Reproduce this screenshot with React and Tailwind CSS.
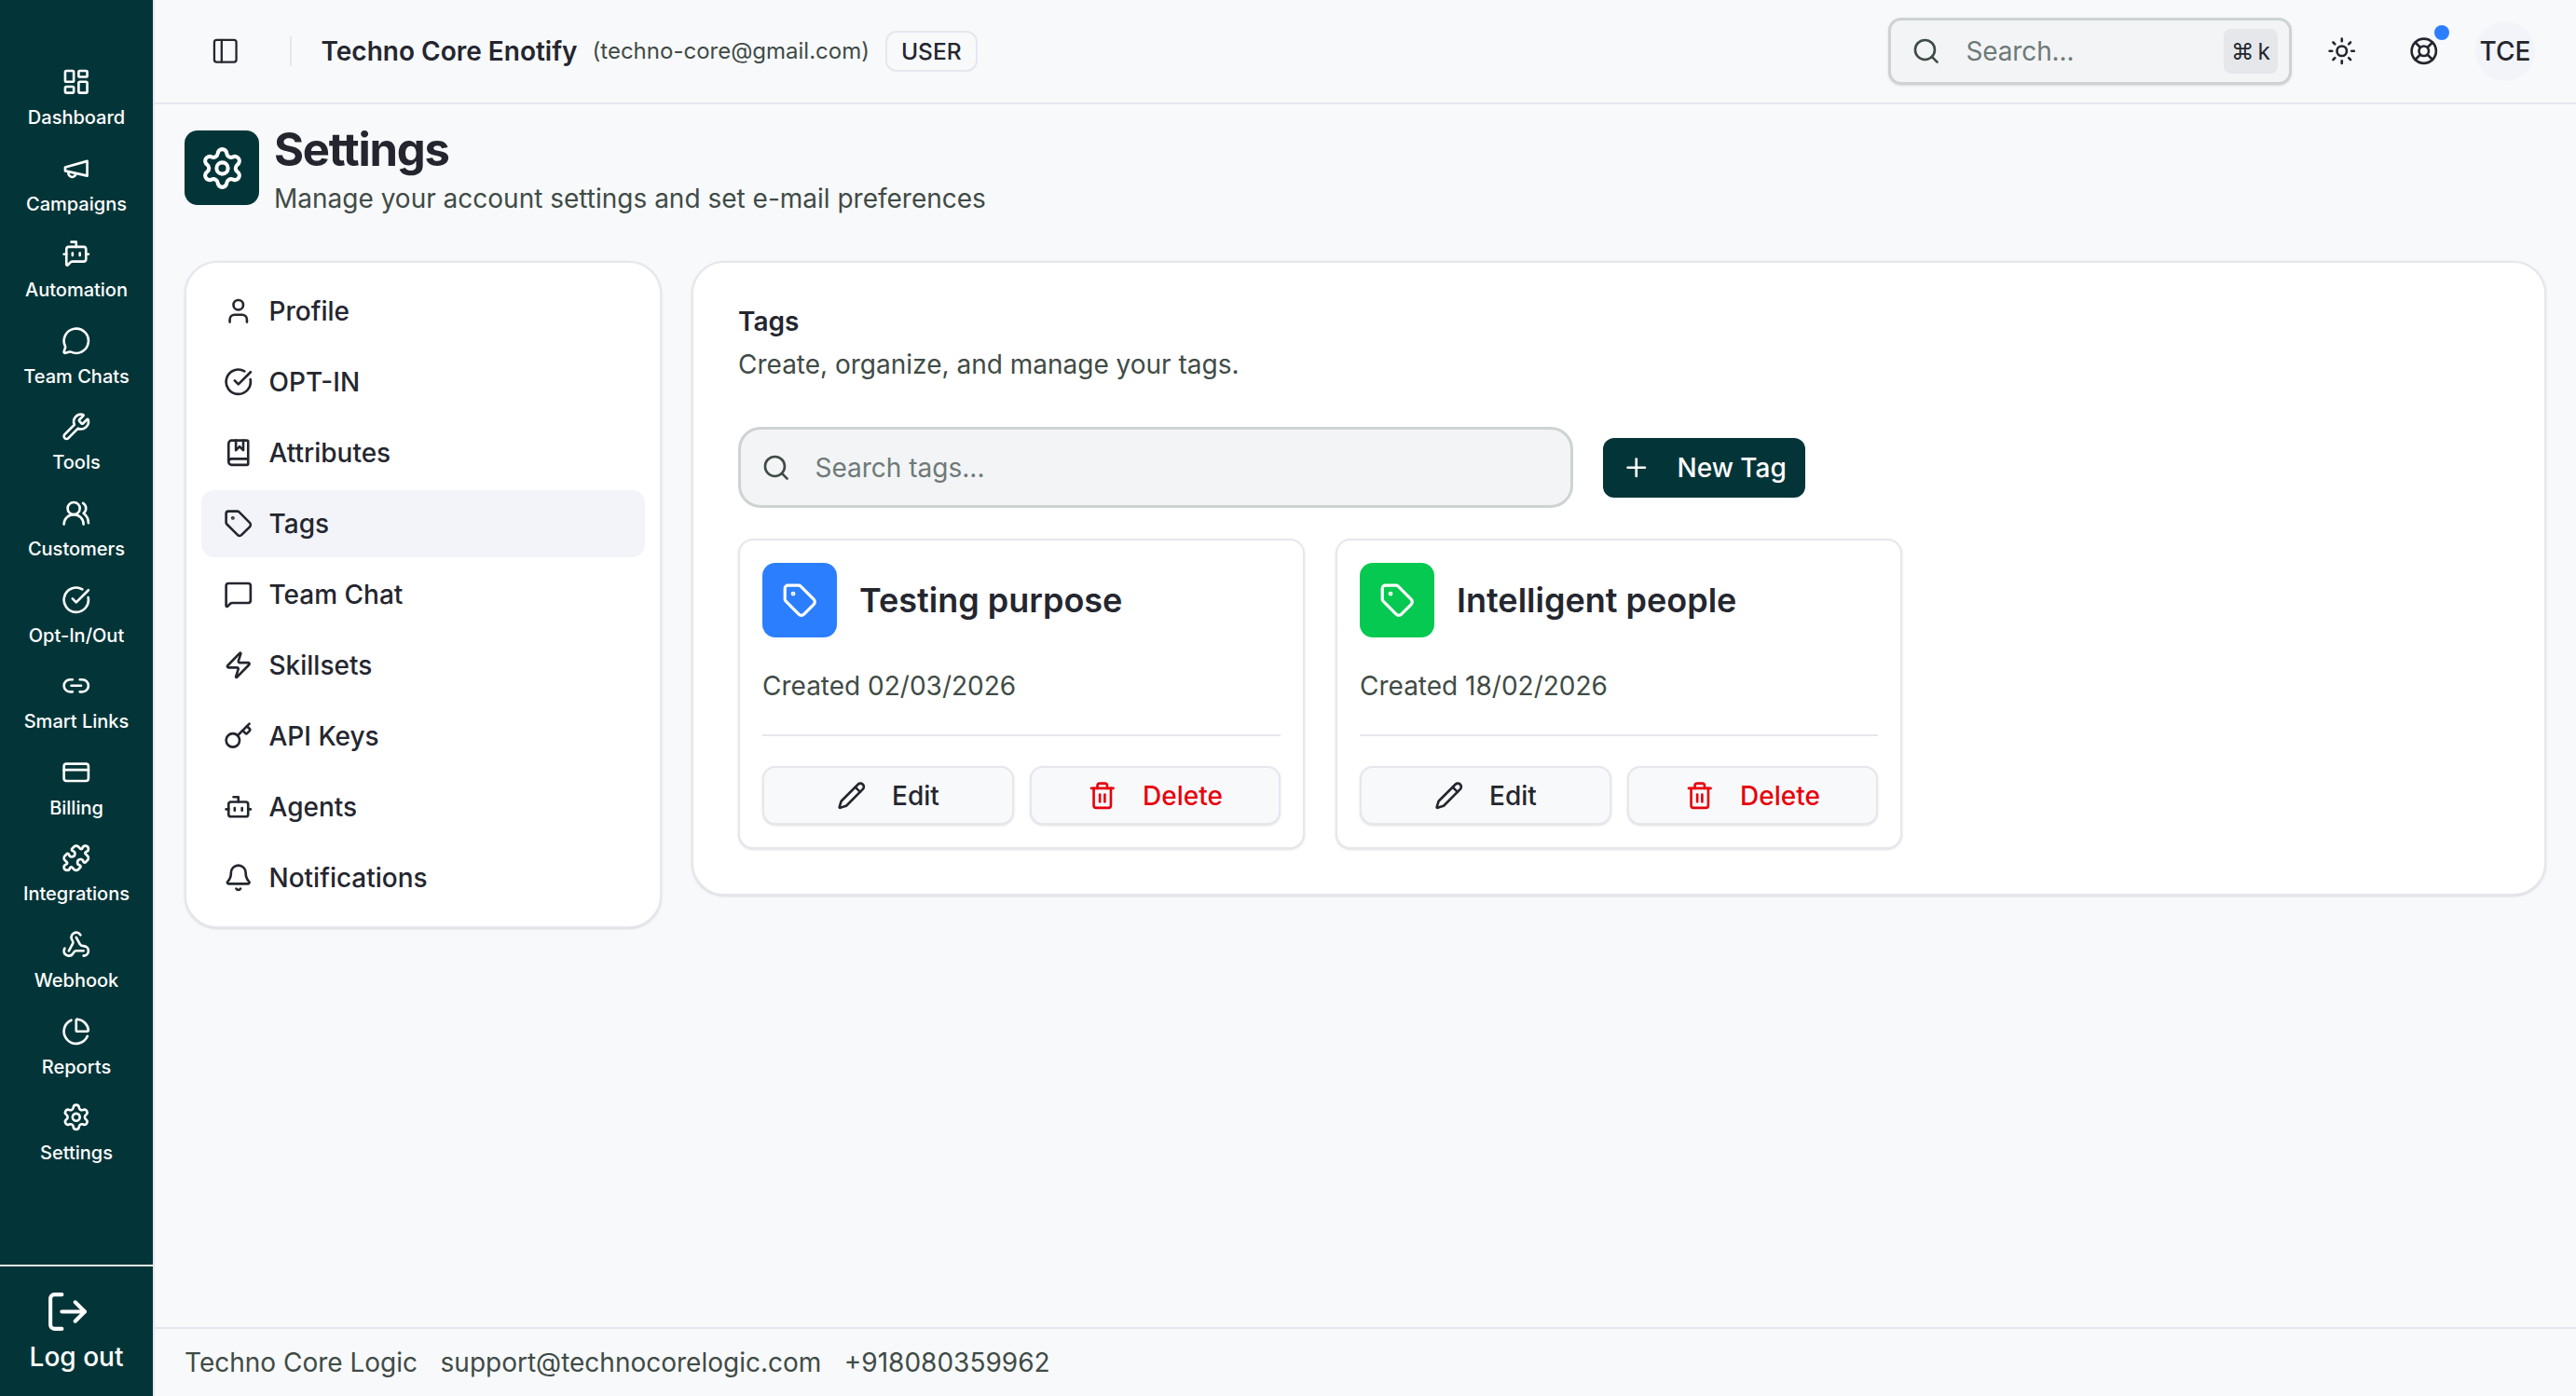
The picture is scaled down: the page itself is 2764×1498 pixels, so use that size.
import React from "react";
import {
  LayoutDashboard,
  BotMessageSquare,
  MessageCircle,
  Wrench,
  UsersRound,
  CircleCheckBig,
  Link2,
  CreditCard,
  Puzzle,
  Webhook,
  ChartPie,
  Settings,
  LogOut,
  PanelLeft,
  Search,
  Sun,
  LifeBuoy,
  User,
  BookMarked,
  Tag,
  MessageSquare,
  Zap,
  Key,
  Bot,
  Bell,
  Plus,
  Pencil,
  Trash2,
} from "lucide-react";

// lucide's current megaphone is a different drawing, so this one is inline
function Megaphone({ size }) {
  return (
    <svg
      width={size}
      height={size}
      viewBox="0 0 24 24"
      fill="none"
      stroke="currentColor"
      strokeWidth="2"
      strokeLinecap="round"
      strokeLinejoin="round"
    >
      <path d="m3 11 18-5v12L3 14v-3z" />
      <path d="M11.6 16.8a3 3 0 1 1-5.8-1.6" />
    </svg>
  );
}

const mainNav = [
  { label: "Dashboard", icon: LayoutDashboard },
  { label: "Campaigns", icon: Megaphone },
  { label: "Automation", icon: BotMessageSquare },
  { label: "Team Chats", icon: MessageCircle },
  { label: "Tools", icon: Wrench },
  { label: "Customers", icon: UsersRound },
  { label: "Opt-In/Out", icon: CircleCheckBig },
  { label: "Smart Links", icon: Link2 },
  { label: "Billing", icon: CreditCard },
  { label: "Integrations", icon: Puzzle },
  { label: "Webhook", icon: Webhook },
  { label: "Reports", icon: ChartPie },
  { label: "Settings", icon: Settings },
];

const settingsNav = [
  { label: "Profile", icon: User },
  { label: "OPT-IN", icon: CircleCheckBig },
  { label: "Attributes", icon: BookMarked },
  { label: "Tags", icon: Tag, active: true },
  { label: "Team Chat", icon: MessageSquare },
  { label: "Skillsets", icon: Zap },
  { label: "API Keys", icon: Key },
  { label: "Agents", icon: Bot },
  { label: "Notifications", icon: Bell },
];

const tags = [
  { name: "Testing purpose", created: "02/03/2026", color: "bg-[#2b7fff]" },
  { name: "Intelligent people", created: "18/02/2026", color: "bg-[#05c950]" },
];

function Sidebar() {
  return (
    <aside className="flex h-full w-[164px] shrink-0 flex-col bg-[#033538] text-white">
      <nav className="flex flex-1 flex-col items-center gap-[24.5px] pt-[72px]">
        {mainNav.map(({ label, icon: Icon }) => (
          <a key={label} className="flex flex-col items-center gap-[8.6px]">
            <Icon size={31.5} />
            <span className="text-[20px] leading-[28px] font-medium whitespace-nowrap">{label}</span>
          </a>
        ))}
      </nav>
      <div className="flex h-[141px] flex-col items-center border-t-2 border-[#e6e7ee] pt-[24px]">
        <LogOut size={49} className="mr-[20px]" />
        <span className="mt-[5px] text-[28px] leading-[38px] font-medium">Log out</span>
      </div>
    </aside>
  );
}

function TopBar() {
  return (
    <header className="flex h-[112px] shrink-0 items-center border-b-2 border-[#e6e7ee] pr-[44px] pl-[60px]">
      <PanelLeft size={31.5} className="text-[#24262f]" strokeWidth={1.75} />
      <div className="mr-[32px] ml-[53px] h-[32px] w-[2px] bg-[#e6e7ee]" />
      <span className="text-[28px] font-semibold text-[#24262f]">Techno Core Enotify</span>
      <span className="ml-[16px] text-[24px] text-[#3f4b46]">(techno-core@gmail.com)</span>
      <span className="ml-[17px] flex h-[44px] items-center rounded-[12px] border-2 border-[#e6e7ee] px-[15px] text-[24.5px] font-medium text-[#24262f]">
        USER
      </span>
      <div className="ml-auto flex h-[72px] w-[433px] items-center rounded-[14px] border-[3px] border-[#cdd3d3] bg-[#f3f4f6] pr-[12px] pl-[22px] shadow-sm">
        <Search size={31.5} className="text-[#3f4b46]" />
        <span className="ml-[27px] text-[28px] tracking-[-0.005em] text-[#6e7a78]">Search...</span>
        <span className="ml-auto flex h-[48px] w-[58px] items-center justify-center gap-[4px] rounded-[8px] bg-[#e5e7eb] text-[24.5px] text-[#24262f]">
          <span>⌘</span>
          <span>k</span>
        </span>
      </div>
      <Sun size={31.5} className="ml-[37.5px] text-[#24262f]" />
      <div className="relative ml-[56.5px]">
        <LifeBuoy size={31.5} className="text-[#24262f]" />
        <span className="absolute -top-[12px] -right-[12px] h-[16px] w-[16px] rounded-full bg-[#2b7fff]" />
      </div>
      <div className="ml-[40px] flex h-[64px] w-[64px] items-center justify-center rounded-full bg-[#f3f4f9] text-[28px] font-medium text-[#24262f]">
        TCE
      </div>
    </header>
  );
}

function TagCard({ tag }) {
  return (
    <div className="rounded-[16px] border-2 border-[#e6e7ee] bg-white p-[24px] shadow-sm">
      <div className="flex items-center gap-[24px]">
        <div className={`flex h-[80px] w-[80px] items-center justify-center rounded-[14px] text-white ${tag.color}`}>
          <Tag size={38.5} />
        </div>
        <h3 className="text-[36px] font-semibold text-[#24262f]">{tag.name}</h3>
      </div>
      <p className="mt-[34px] text-[28px] leading-[36px] text-[#3f4b46]">Created {tag.created}</p>
      <div className="mt-[34px] h-[2px] bg-[#e6e7ee]" />
      <div className="mt-[32px] grid grid-cols-2 gap-[17px]">
        <button className="flex h-[63px] items-center justify-center gap-[28px] rounded-[14px] border-2 border-[#e6e7ee] bg-[#f8f9fb] text-[28px] font-medium text-[#24262f] shadow-sm">
          <Pencil size={31.5} />
          Edit
        </button>
        <button className="flex h-[63px] items-center justify-center gap-[28px] rounded-[14px] border-2 border-[#e6e7ee] bg-[#f8f9fb] text-[28px] font-medium text-[#e7000b] shadow-sm">
          <Trash2 size={31.5} />
          Delete
        </button>
      </div>
    </div>
  );
}

export default function App() {
  return (
    <div className="flex h-screen overflow-hidden bg-[#f8f9fb] [font-family:Inter,sans-serif]">
      <Sidebar />
      <main className="flex min-w-0 flex-1 flex-col border-l-2 border-[#e6e7ee]">
        <TopBar />

        <div className="flex-1 px-[32px] pt-[20px]">
          {/* Page title */}
          <div className="flex items-start gap-[16px]">
            <div className="mt-[8px] flex h-[80px] w-[80px] items-center justify-center rounded-[14px] bg-[#033538] text-white">
              <Settings size={49} />
            </div>
            <div className="pt-[3px]">
              <h1 className="text-[49px] leading-[52px] font-bold tracking-[-0.025em] text-[#24262f]">Settings</h1>
              <p className="mt-[8px] text-[28px] leading-[36px] text-[#3f4b46]">
                Manage your account settings and set e-mail preferences
              </p>
            </div>
          </div>

          <div className="mt-[49px] flex items-start gap-[32px]">
            {/* Settings menu */}
            <div className="flex w-[512px] shrink-0 flex-col gap-[4px] rounded-[35px] border-2 border-[#e6e7ee] bg-white p-[16px] shadow-sm">
              {settingsNav.map(({ label, icon: Icon, active }) => (
                <a
                  key={label}
                  className={`flex h-[72px] items-center gap-[17px] rounded-[14px] pl-[24px] text-[28px] font-medium text-[#24262f] ${
                    active ? "bg-[#f2f4f9]" : ""
                  }`}
                >
                  <Icon size={31.5} />
                  {label}
                </a>
              ))}
            </div>

            {/* Tags panel */}
            <section className="min-w-0 flex-1 rounded-[35px] border-2 border-[#e6e7ee] bg-white px-[48px] pt-[45px] pb-[48px] shadow-sm">
              <h2 className="text-[28px] leading-[36px] font-semibold text-[#24262f]">Tags</h2>
              <p className="mt-[10px] text-[28px] leading-[36px] text-[#3f4b46]">
                Create, organize, and manage your tags.
              </p>

              <div className="mt-[49px] flex items-center gap-[32px]">
                <div className="flex h-[87px] w-[896px] items-center rounded-[24px] border-[3px] border-[#cdd3d3] bg-[#f3f4f6] pl-[22px]">
                  <Search size={31.5} className="text-[#3f4b46]" />
                  <span className="ml-[26px] text-[28px] text-[#6e7a78]">Search tags...</span>
                </div>
                <button className="flex h-[64px] items-center gap-[28px] rounded-[12px] bg-[#033538] pr-[20px] pl-[20px] text-[28px] font-medium text-white">
                  <Plus size={31.5} />
                  New Tag
                </button>
              </div>

              <div className="mt-[33px] grid grid-cols-3 gap-[33px]">
                {tags.map((tag) => (
                  <TagCard key={tag.name} tag={tag} />
                ))}
              </div>
            </section>
          </div>
        </div>

        <footer className="flex h-[74px] shrink-0 items-center gap-[24.5px] border-t-2 border-[#e6e7ee] px-[32px] text-[28px] text-[#3f4b46]">
          <span>Techno Core Logic</span>
          <span>support@technocorelogic.com</span>
          <span>+918080359962</span>
        </footer>
      </main>
    </div>
  );
}
